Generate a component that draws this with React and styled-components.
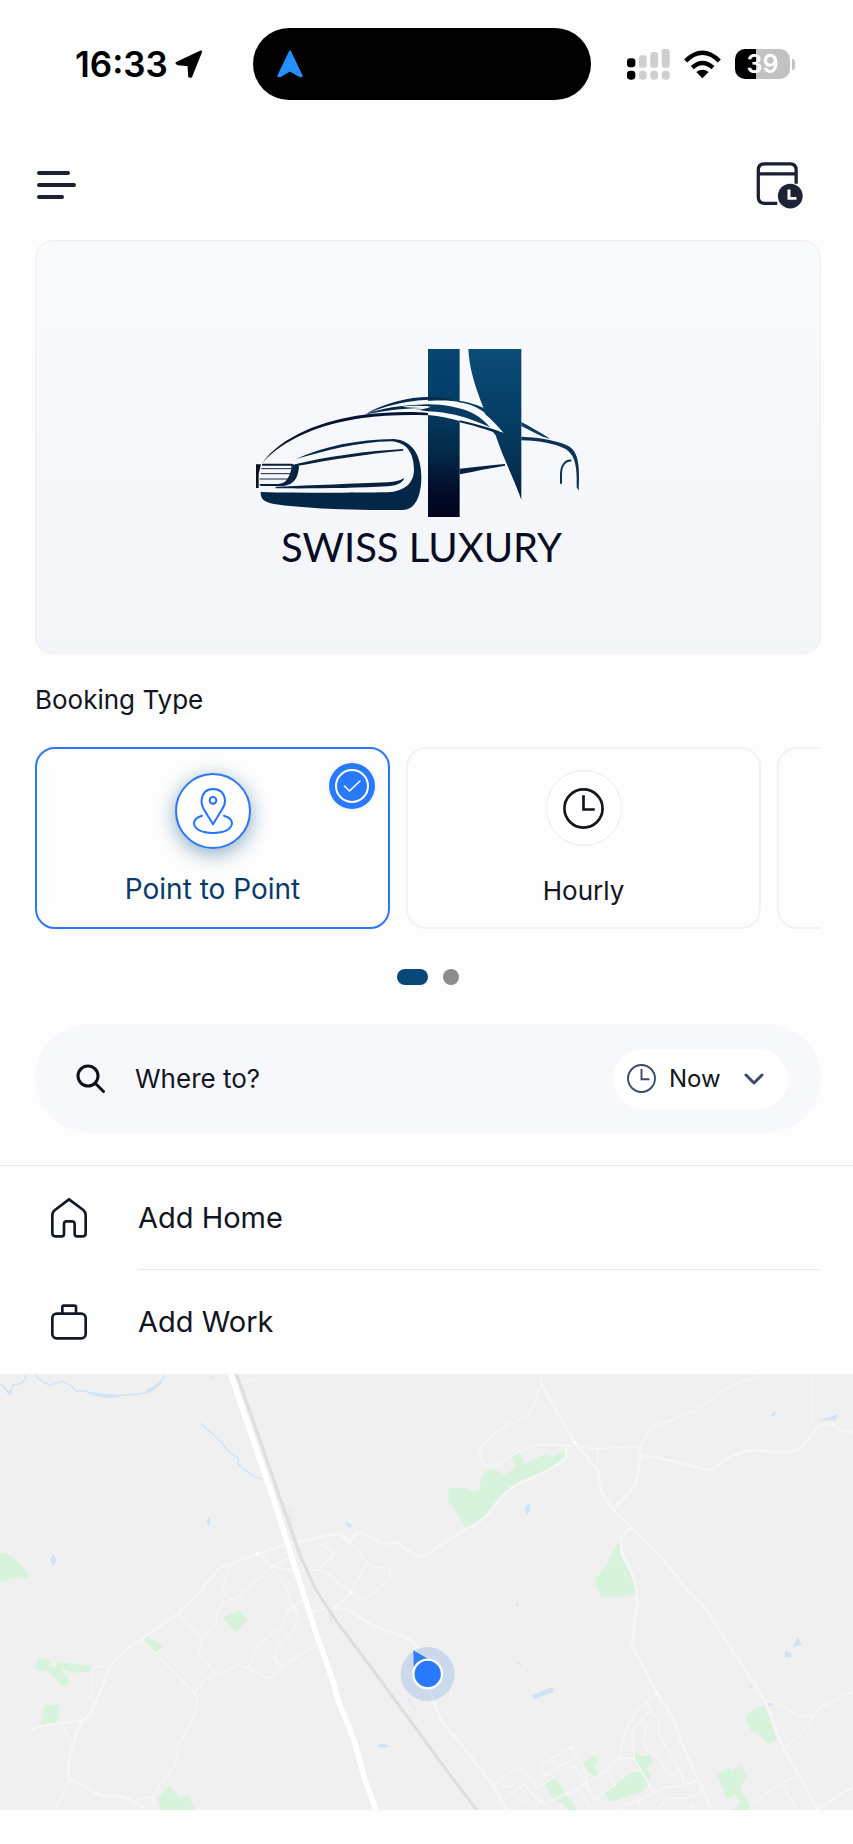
import React, { useState } from "react";
import styled, { createGlobalStyle } from "styled-components";

const GlobalStyle = createGlobalStyle`
  * {
    box-sizing: border-box;
  }

  body {
    margin: 0;
    background: #fdfdfd;
    color: #111522;
    font-family: Inter, "Liberation Sans", sans-serif;
  }

  button, input, select {
    font: inherit;
    color: inherit;
    border: 0;
    padding: 0;
    background: none;
  }

  svg {
    display: block;
    flex: none;
  }
`;

function CarLogo() {
  return (
    <svg width="340" height="172" viewBox="34 50 1020 516" aria-hidden="true">
      <defs>
        <linearGradient id="bar" x1="0" y1="56" x2="0" y2="560" gradientUnits="userSpaceOnUse">
          <stop offset="0" stopColor="#07446e" />
          <stop offset="0.25" stopColor="#04406a" />
          <stop offset="0.6" stopColor="#042b4b" />
          <stop offset="0.85" stopColor="#030c2a" />
          <stop offset="1" stopColor="#02041c" />
        </linearGradient>
        <linearGradient id="wing" x1="0" y1="56" x2="0" y2="508" gradientUnits="userSpaceOnUse">
          <stop offset="0" stopColor="#0b4c77" />
          <stop offset="0.5" stopColor="#053c63" />
          <stop offset="1" stopColor="#042543" />
        </linearGradient>
      </defs>
      <path fill="url(#bar)" d="M562 56H657V560H562Z" />
      <path fill="url(#wing)" d="M683 56H842V508C818 440 788 385 765 315L745 290L728 232C702 165 686 115 683 56Z" />
      {/* roof */}
      <path fill="#f7f9fc" d="M540 214C620 206 670 213 702 230C738 250 765 280 789 308C740 292 690 280 657 272C620 262 590 256 561 254L540 240Z" />
      <path fill="#063a60" d="M562 222C610 222 660 232 690 246C715 258 735 275 748 291C715 276 685 264 657 257C620 248 590 244 562 243Z" />
      <path fill="#04284a" d="M372 253C430 217 510 199 570 200C600 200 620 204 632 210C600 206 560 207 520 212C460 220 420 232 372 253Z" />
      <path fill="#04385f" d="M655 211C692 216 712 226 728 232L736 250C706 228 690 222 655 216Z" />
      <path fill="#04284a" d="M657 270C700 279 745 291 790 309L765 307C720 293 690 283 657 276Z" />
      <path fill="#04284a" d="M372 253C420 234 480 224 564 222V227C530 227 505 227 485 230H564V243C545 240 535 238 526 238L545 234C480 234 430 242 372 253Z" />
      <path fill="#f7f9fc" d="M485 229C510 225 540 225 570 229C560 234 545 237 526 239L540 233C520 231 500 231 485 229Z" />
      <path fill="#061332" d="M65 398C120 318 250 268 370 253C440 244 520 243 562 248V255C500 252 430 254 360 264C240 282 130 325 65 398Z" />
      {/* grille and head lamp */}
      <path fill="#0a1020" d="M46 402H61L54 430V473H46Z" />
      <path fill="#04213f" d="M64 400H152L175 407C173 440 162 462 130 467H60L56 461H112C136 461 149 440 153 408L148 406H64Z" />
      <path fill="none" stroke="#132945" strokeWidth="3" d="M62 415H153M60 430H149M57 446H143" />
      <path fill="none" stroke="#132945" strokeWidth="4" d="M152 404Q163 407 158 425Q154 450 138 462" />
      {/* bumper */}
      <path fill="#042748" d="M60 485C200 489 350 487 440 486C492 482 520 460 520 415C518 368 500 337 452 333C350 335 250 362 166 386C250 348 350 327 460 326C512 330 542 370 542 440C542 500 522 540 484 539C350 540 200 536 100 521C70 515 60 507 60 485Z" />
      <path fill="#06223f" d="M163 402C260 378 380 362 488 356L487 361C380 370 260 390 163 408Z" />
      <path fill="#06223f" d="M105 469C220 466 340 459 440 456C465 454 480 450 491 443C485 460 465 466 440 468C340 474 200 475 105 474Z" />
      <path fill="#04213f" d="M657 415C700 411 750 404 793 401V406C750 413 700 423 657 432Z" />
      {/* rear */}
      <path fill="#0a3c61" d="M842 275C870 290 900 307 929 326C895 318 870 300 842 287Z" />
      <path fill="#0a3358" d="M842 319C900 321 960 333 987 349C1012 368 1018 400 1014 481L1008 471C1010 405 1002 374 975 356C940 340 900 331 842 330Z" />
      <path fill="none" stroke="#0a3358" strokeWidth="6" d="M961 460V432C961 405 975 388 992 391" />
    </svg>
  );
}

function ClockIcon({ size, stroke = 2 }) {
  return (
    <svg width={size} height={size} viewBox="0 0 40 40" fill="none" stroke="currentColor" strokeWidth={stroke} aria-hidden="true">
      <circle cx="20" cy="20" r="18.6" />
      <path d="M20 7V21H31" />
    </svg>
  );
}

function PinIcon() {
  return (
    <svg width="40" height="46" viewBox="0 0 120 138" fill="none" stroke="#1f75fb" strokeWidth="6" strokeLinejoin="round" strokeLinecap="round" aria-hidden="true">
      <path d="M60 109L32 63Q24 47 26 36Q30 3 60 3Q92 3 96 36Q97 48 88 63Z" />
      <circle cx="60" cy="37" r="10" />
      <path d="M27 83Q3 90 3 107Q8 134 60 135Q112 134 117 107Q117 90 93 83" />
    </svg>
  );
}

// Roads, parks and ponds share one coordinate grid; the east side is shifted by 1281.
function MapDrawing() {
  return (
    <MapSvg viewBox="0 12 2559 1308" preserveAspectRatio="xMidYMid slice" role="img" aria-label="Map of the area around you">
      <path fill="#f0f0f0" d="M0 0H2559V1320H0Z" />
      <g fill="#d8f3dc">
        <path d="M0 549Q25 546 45 567Q70 590 90 622L40 626L0 636Z" />
        <path d="M667 745L690 731H702L718 718L744 750L707 787Z" />
        <path d="M424 808L446 791L448 811H466L489 826L464 853Z" />
        <path d="M106 895Q108 868 120 865L149 869L147 885L165 894Q170 875 181 875L275 888V903L230 909L184 898Q184 905 208 931L192 950L153 911L140 903L107 903Z" />
        <path d="M134 1004H172L178 1013L168 1060L122 1064Z" />
        <path d="M481 1320L473 1285L507 1247L537 1280L566 1278L587 1320Z" />
      </g>
      <g fill="#d8f3dc" transform="translate(1281 0)">
        <path d="M64 353H112Q145 371 158 357Q158 295 202 297L233 314L265 292L252 260L277 249L295 281L352 253L377 260L416 241V267Q390 285 335 316L265 342Q235 363 190 425Q165 455 115 474L82 417L65 393Z" />
        <path d="M576 512L584 560L614 615L628 669Q570 690 521 681L503 630L540 583Q552 550 576 512Z" />
        <path d="M954 1043Q975 1017 1013 1005L1051 1110L1022 1122Q998 1090 973 1083Z" />
        <path d="M870 1216L903 1193L918 1202L939 1188L964 1218L938 1253L971 1307L968 1320H914L940 1299L923 1275L898 1287Z" />
        <path d="M534 1269L610 1208L642 1202Q660 1235 664 1247L645 1267L548 1296Z" />
        <path d="M613 1152L635 1145L640 1157L667 1155L678 1178L660 1196L672 1217L664 1230L640 1198L623 1168Z" />
        <path d="M469 1180L503 1155L514 1173L502 1187L517 1214L505 1221L485 1207Z" />
        <path d="M350 1240L385 1219L418 1278L430 1288L452 1320H428L402 1296L386 1294Z" />
      </g>
      <g fill="#cfe3f7">
        <path d="M160 551L169 572L160 591L151 572Z" />
        <path d="M626 443L632 456L626 469L619 456Z" />
        <path d="M1036 460L1042 457L1057 467L1048 475Z" />
        <path d="M1129 1129Q1147 1114 1167 1129L1147 1133Z" />
        <path d="M250 62Q290 70 370 80L335 84Q285 84 250 62Z" />
        <path d="M430 71L445 55Q475 50 494 15Q480 62 430 73Z" />
        <path d="M0 40L28 66L36 50V73L24 72Z" />
        <path d="M1046 806L1056 812V820L1047 817Z" />
      </g>
      <g fill="#cfe3f7" transform="translate(1281 0)">
        <path d="M1030 136L1045 120L1047 130L1037 140Z" />
        <path d="M1176 152L1234 132L1226 151Z" />
        <path d="M712 259L738 266L716 264Z" />
        <path d="M290 414L308 401L309 421L301 432Z" />
        <path d="M1095 834L1112 802L1126 823Z" />
        <path d="M1075 841L1094 850L1092 862H1072Z" />
        <path d="M315 976L376 951L380 967L323 987Z" />
        <path d="M962 936L975 950L971 952Z" />
        <path d="M1017 996L1042 1001L1022 1010Z" />
        <path d="M266 877L282 880V888Z" />
        <path d="M266 701H274V708H266Z" />
      </g>
      <g fill="none" stroke="#cfe3f7" strokeWidth="4">
        <path d="M0 40L30 68L40 44Q74 46 78 14M106 14Q116 34 152 46L185 34Q214 42 229 64L250 62Q310 82 420 72Q475 60 494 14M638 14V26" />
        <path d="M601 160L660 212Q680 242 715 266V281Q750 320 788 328" />
        <path strokeOpacity="0.6" d="M872 415Q862 455 885 480M820 370L853 400M990 735L994 758M1221 980L1247 1021" />
      </g>
      {/* lanes */}
      <g fill="none" stroke="#f7f7f7" strokeWidth="4" strokeLinejoin="round">
        <path d="M690 585L668 645L672 675L700 692L815 590L864 565M780 552L815 590L884 602L956 600L1003 550L962 523M975 500L980 524M815 605L845 628L895 745L886 772L833 832L823 866L847 890L808 926L742 895L714 884L617 928L583 968Q600 998 583 1036L534 1130L525 1185L454 1280M672 690L650 730V755L608 806L596 847L645 912M535 730L608 806M424 808L583 968M742 895L778 820L845 770L870 714L914 690M847 890L956 820" />
        <path d="M956 600Q985 603 1012 637L1090 692L1170 625V595L1116 590L1030 495M1100 577L1052 668L1003 712M276 890L278 1000M332 886L276 892M184 1060L215 1115M208 1228L165 1320M410 1288L454 1282L470 1320M710 46L770 22" />
      </g>
      <g fill="none" stroke="#f6f6f6" strokeWidth="8" strokeLinejoin="round">
        <path d="M95 1080Q130 1062 247 1053L275 1028L332 886Q365 840 424 808L535 730L600 665L660 592L770 553L865 520L1020 490L1045 517L1070 488Q1110 495 1145 522L1190 517Q1235 555 1270 560L1395 479Q1440 461 1471 425Q1520 350 1580 330Q1665 295 1698 262V230" />
        <path d="M247 1053Q195 1160 208 1228L250 1245Q290 1280 320 1279Q385 1270 435 1318M935 727Q1010 704 1050 722Q1120 775 1170 785Q1235 805 1245 820L1260 870Q1290 960 1310 1022Q1330 1070 1370 1105L1470 1235L1520 1320" />
      </g>
      <g fill="none" stroke="#f7f7f7" strokeWidth="4" strokeLinejoin="round" transform="translate(1281 0)">
        <path d="M344 40Q325 95 308 128Q290 148 242 163Q130 240 165 267Q180 310 245 264Q295 228 345 223L443 228M343 12V42M458 232L512 236L640 229L675 170Q750 145 810 118Q850 90 890 60Q930 38 1000 14M512 236V295M1154 14V150L1165 164M690 968Q590 1035 578 1165L530 1205L470 1245L350 1305M578 1165H620L642 1200L677 1268M655 993L695 1055V1090L765 1220L770 1242M670 1022L615 1080V1110L622 1165M645 1055L658 1065L650 1110L655 1135L695 1165L728 1214H754" />
        <path d="M340 1187L432 1130L480 1212L475 1240L418 1278M340 1187L355 1215L450 1160M370 1165L390 1190M202 1245L265 1194Q290 1190 300 1215L332 1252L385 1220M202 1245L240 1320M220 1240L240 1252L260 1245M292 1245L232 1286M292 1245L350 1306M275 1285L292 1300M320 1315L350 1290M420 1190L445 1190L470 1230M475 1230L500 1288L565 1245L540 1205M460 1260L490 1318M570 1320L720 1250H755L815 1230M690 1320L722 1285H785Q820 1275 824 1250M635 1295V1320M780 1320L800 1300M1013 990Q1045 990 1117 1041L1160 1036L1180 1012L1278 962M1160 1036Q1135 1090 1070 1135M1115 1212L1020 1267L970 1307M1070 1250L1110 1320" />
      </g>
      <g fill="none" stroke="#f6f6f6" strokeWidth="8" strokeLinejoin="round" transform="translate(1281 0)">
        <path d="M343 40L443 218L512 300L525 370L556 418L700 560L790 670L832 710L1013 990L1070 1140L1115 1212L1170 1318M640 225V262Q635 340 600 375L556 418M640 254L730 270L850 303Q920 240 990 240Q1080 255 1120 235L1165 180Q1170 160 1215 162L1250 184H1278M610 472L582 505L584 550L615 610Q640 680 625 740L614 825L690 968L740 1050L770 1135L855 1320M810 1230L828 1250M1170 1318L1278 1250" />
      </g>
      <g fill="#fff">
        <circle cx="770" cy="553" r="5" />
        <circle cx="1052" cy="668" r="4" />
        <circle cx="1725" cy="218" r="6" />
        <circle cx="1971" cy="970" r="4" />
      </g>
      <path fill="none" stroke="#dedede" strokeWidth="9" d="M709 12L750 125L830 355L900 555L945 655L1010 755L1130 915L1281 1120L1340 1202L1430 1320" />
      <path fill="none" stroke="#fff" strokeWidth="17" strokeLinejoin="round" d="M693 12L720 95L780 270L825 400L870 545L950 795L1003 945Q1010 990 1030 1030L1065 1120L1095 1230L1129 1320" />
      <circle cx="1283" cy="912" r="81" fill="#2b74dc" fillOpacity="0.18" />
      <path fill="#2f80f7" d="M1240 841L1284 866L1262 880L1241 890Z" />
      <circle cx="1283" cy="912" r="43" fill="#2979ff" stroke="#fff" strokeWidth="7" />
    </MapSvg>
  );
}

const TYPES = [
  { id: "point", label: "Point to Point", icon: <PinIcon /> },
  { id: "hourly", label: "Hourly", icon: <ClockIcon size={41} stroke={2.6} /> },
];

export default function App() {
  const [type, setType] = useState("point");

  return (
    <Screen>
      <GlobalStyle />
      <StatusBar>
        <Time>
          16:33
          <svg width="28" height="28" viewBox="0 0 84 84" aria-hidden="true">
            <path fill="#000" stroke="#000" strokeWidth="7" strokeLinejoin="round" d="M78 5L5 39L8 42L41 45L43 79L48 80Z" />
          </svg>
        </Time>
        <Island>
          <svg width="26" height="28" viewBox="0 0 78 84" aria-hidden="true">
            <path fill="#2490ff" stroke="#2490ff" strokeWidth="6" strokeLinejoin="round" d="M39 4L74 78L70 79L39 61L8 79L4 78Z" />
          </svg>
        </Island>
        <Signals>
          <svg width="43" height="31" viewBox="0 0 129 93" aria-hidden="true">
            <g fill="#000">
              <rect x="0" y="28" width="25" height="27" rx="9" />
              <rect x="0" y="65" width="25" height="27" rx="10" />
            </g>
            <g fill="#cfcfcf">
              <rect x="36" y="19" width="23" height="37" rx="8" />
              <rect x="36" y="65" width="23" height="27" rx="10" />
              <rect x="70" y="9" width="23" height="47" rx="8" />
              <rect x="70" y="65" width="23" height="27" rx="10" />
              <rect x="104" y="0" width="24" height="56" rx="8" />
              <rect x="104" y="65" width="24" height="27" rx="10" />
            </g>
          </svg>
          <svg width="37" height="29" viewBox="0 0 111 87" aria-hidden="true">
            <g fill="none" stroke="#000" strokeWidth="13">
              <path d="M5 33Q55 -16 106 33" />
              <path d="M25 53Q55 25 87 53" />
            </g>
            <path d="M37 66Q55 53 74 66L55 85Z" />
          </svg>
          <Battery>
            <Charge>39</Charge>
            <Nub />
          </Battery>
        </Signals>
      </StatusBar>

      <Header>
        <IconButton aria-label="Menu">
          <svg width="40" height="30" viewBox="0 0 40 30" fill="none" stroke="#1a2033" strokeWidth="4" strokeLinecap="round">
            <path d="M2 3H31M2 15H37M2 27H25" />
          </svg>
        </IconButton>
        <IconButton aria-label="Scheduled rides">
          <svg width="47" height="48" viewBox="0 0 144 144" fill="none" stroke="#1a2033" strokeWidth="10">
            <path d="M65 128H26Q7 128 7 109V26Q7 7 26 7H105Q123 7 123 26V68M7 38H123" />
            <circle cx="105" cy="106" r="38" fill="#1e2436" stroke="none" />
            <path stroke="#fff" strokeWidth="9" d="M101 86V113H124" />
          </svg>
        </IconButton>
      </Header>

      <Main>
        <Brand>
          <CarLogo />
          <BrandName>SWISS LUXURY</BrandName>
        </Brand>

        <SectionTitle id="booking-type">Booking Type</SectionTitle>
        <TypeRow role="radiogroup" aria-labelledby="booking-type">
          {TYPES.map((t) => (
            <TypeCard key={t.id} $active={type === t.id}>
              <HiddenRadio type="radio" name="type" value={t.id} checked={type === t.id} onChange={() => setType(t.id)} />
              <TypeIcon $active={type === t.id}>{t.icon}</TypeIcon>
              <TypeLabel $active={type === t.id}>{t.label}</TypeLabel>
              {type === t.id && (
                <Badge>
                  <svg width="36" height="36" viewBox="0 0 36 36" fill="none" stroke="#fff" strokeLinejoin="round" strokeLinecap="round" aria-hidden="true">
                    <circle cx="18" cy="18" r="16" strokeWidth="2" />
                    <path strokeWidth="1.6" d="M10.500 18L15.500 23L26 13" />
                  </svg>
                </Badge>
              )}
            </TypeCard>
          ))}
          <TypeCard as="div" />
        </TypeRow>
        <Dots>
          <Dot $active aria-label="Page 1" />
          <Dot aria-label="Page 2" />
        </Dots>

        <SearchBar>
          <svg width="30" height="30" viewBox="0 0 30 30" fill="none" stroke="#0c101c" strokeWidth="3" strokeLinecap="round" aria-hidden="true">
            <circle cx="12" cy="12" r="10" />
            <path d="M19.500 19.500L27.500 27.500" />
          </svg>
          <SearchInput type="text" placeholder="Where to?" aria-label="Where to?" />
          <WhenPill>
            <ClockIcon size={29} stroke={2.6} />
            <WhenSelect aria-label="Pickup time">
              <option>Now</option>
            </WhenSelect>
            <svg width="20" height="14" viewBox="0 0 20 14" fill="none" stroke="currentColor" strokeWidth="3" strokeLinecap="round" strokeLinejoin="round" aria-hidden="true">
              <path d="M2 3L10 11L18 3" />
            </svg>
          </WhenPill>
        </SearchBar>
      </Main>

      <Places>
        <Place>
          <svg width="36" height="40" viewBox="0 0 108 120" fill="none" stroke="#111827" strokeWidth="8" strokeLinejoin="round" aria-hidden="true">
            <path d="M54 4L12 36Q4 42 4 52V106Q4 115 13 115H32Q39 115 39 108V78Q39 70 47 70H62Q71 70 71 78V108Q71 115 78 115H96Q104 115 104 106V52Q104 42 97 36Z" />
          </svg>
          <PlaceLabel $line>Add Home</PlaceLabel>
        </Place>
        <Place>
          <svg width="36" height="36" viewBox="0 0 108 108" fill="none" stroke="#111827" strokeWidth="8" strokeLinejoin="round" aria-hidden="true">
            <rect x="4" y="29" width="100" height="74" rx="13" />
            <path d="M34 29V9Q34 5 38 5H70Q75 5 75 9V29" />
          </svg>
          <PlaceLabel>Add Work</PlaceLabel>
        </Place>
      </Places>

      <MapDrawing />
    </Screen>
  );
}

const Screen = styled.div`
  min-height: 100vh;
  padding-bottom: 34px;
  display: flex;
  flex-direction: column;
`;

const StatusBar = styled.div`
  display: grid;
  grid-template-columns: 1fr 338px 1fr;
  align-items: center;
  padding: 28px 9px 0 0;
`;

const Time = styled.div`
  display: flex;
  align-items: center;
  gap: 7px;
  padding-left: 75px;
  color: #000;
  font-size: 35px;
  line-height: 40px;
  font-weight: 600;
`;

const Island = styled.div`
  display: flex;
  align-items: center;
  height: 72px;
  padding-left: 24px;
  border-radius: 36px;
  background: #000;
`;

const Signals = styled.div`
  display: flex;
  align-items: center;
  gap: 14px;
  padding-left: 36px;
`;

const Battery = styled.div`
  display: flex;
  align-items: center;
  gap: 2px;
`;

const Charge = styled.div`
  width: 55px;
  height: 30px;
  border-radius: 10px;
  background: linear-gradient(90deg, #000 39%, #c2c2c2 39%);
  color: #fff;
  font-size: 25px;
  line-height: 30px;
  font-weight: 600;
  text-align: center;
`;

const Nub = styled.div`
  width: 3px;
  height: 11px;
  border-radius: 0 4px 4px 0;
  background: #c2c2c2;
`;

const Header = styled.header`
  display: flex;
  align-items: center;
  justify-content: space-between;
  padding: 61px 50px 31px 37px;
`;

const IconButton = styled.button`
  cursor: pointer;
`;

const Main = styled.main`
  padding: 0 32px 32px 35px;
`;

const Brand = styled.div`
  display: flex;
  flex-direction: column;
  align-items: center;
  gap: 4px;
  height: 414px;
  padding: 106px 13px 0 0;
  border: 1px solid #eceef3;
  border-radius: 18px;
  background: linear-gradient(#f9fafc, #f3f5fa);
`;

const BrandName = styled.h1`
  margin: 0;
  color: #060d24;
  font-family: Lato, "Liberation Sans", sans-serif;
  font-size: 40px;
  line-height: 48px;
  font-weight: 400;
`;

const SectionTitle = styled.h2`
  margin: 29px 0 30px;
  font-size: 26px;
  line-height: 34px;
  font-weight: 400;
`;

const TypeRow = styled.div`
  display: flex;
  gap: 16px;
  overflow: hidden;
`;

const TypeCard = styled.label`
  position: relative;
  display: flex;
  flex: 0 0 calc((100% - 76px) / 2);
  flex-direction: column;
  align-items: center;
  justify-content: space-between;
  height: 182px;
  padding: ${(props) => (props.$active ? "24px 0 22px" : "21px 0 20px")};
  border: ${(props) => (props.$active ? "2px solid #2979f7" : "2px solid #f1f2f6")};
  border-radius: 20px;
  cursor: pointer;
`;

const HiddenRadio = styled.input`
  position: absolute;
  opacity: 0;
`;

const TypeIcon = styled.span`
  display: flex;
  align-items: center;
  justify-content: center;
  width: 76px;
  height: 76px;
  border: ${(props) => (props.$active ? "2px solid #2979f7" : "1px solid #ececf1")};
  border-radius: 50%;
  background: #fff;
  box-shadow: ${(props) => (props.$active ? "0 5px 20px rgba(8, 76, 124, 0.45)" : "none")};
`;

const TypeLabel = styled.span`
  color: ${(props) => (props.$active ? "#073b6a" : "#111522")};
  font-size: ${(props) => (props.$active ? "28px" : "26px")};
  line-height: 32px;
`;

const Badge = styled.span`
  position: absolute;
  top: 14px;
  right: 13px;
  display: flex;
  align-items: center;
  justify-content: center;
  width: 46px;
  height: 46px;
  border-radius: 50%;
  background: #2979ff;
  box-shadow: 0 0 0 3px #f6f7fb;
`;

const Dots = styled.div`
  display: flex;
  justify-content: center;
  gap: 15px;
  margin: 40px 0 39px;
`;

const Dot = styled.button`
  width: ${(props) => (props.$active ? "31px" : "16px")};
  height: 16px;
  border-radius: 8px;
  background: ${(props) => (props.$active ? "#074878" : "#8c8c8c")};
`;

const SearchBar = styled.div`
  display: flex;
  align-items: center;
  height: 109px;
  padding: 0 33px 0 41px;
  border-radius: 55px;
  background: #f7f8fc;
`;

const SearchInput = styled.input`
  flex: 1;
  min-width: 0;
  margin-left: 29px;
  font-size: 26px;
  line-height: 32px;
  outline: none;

  &::placeholder {
    color: #111522;
    opacity: 1;
  }
`;

const WhenPill = styled.label`
  display: flex;
  align-items: center;
  width: 175px;
  height: 60px;
  padding: 0 24px 0 14px;
  border-radius: 30px;
  background: #fff;
  color: #3c4a6e;
`;

const WhenSelect = styled.select`
  flex: 1;
  min-width: 0;
  margin-left: 13px;
  appearance: none;
  color: #111522;
  font-size: 24px;
  line-height: 32px;
  outline: none;
`;

const Places = styled.nav`
  border-top: 1px solid #e8eaee;
`;

const Place = styled.button`
  display: flex;
  align-items: center;
  width: 100%;
  padding: 0 32px 0 51px;
  text-align: left;
  cursor: pointer;
`;

const PlaceLabel = styled.span`
  flex: 1;
  margin-left: 51px;
  border-bottom: 1px solid ${(props) => (props.$line ? "#e8eaee" : "transparent")};
  font-size: 29px;
  line-height: 103px;
`;

const MapSvg = styled.svg`
  width: 100%;
  height: 436px;
`;
